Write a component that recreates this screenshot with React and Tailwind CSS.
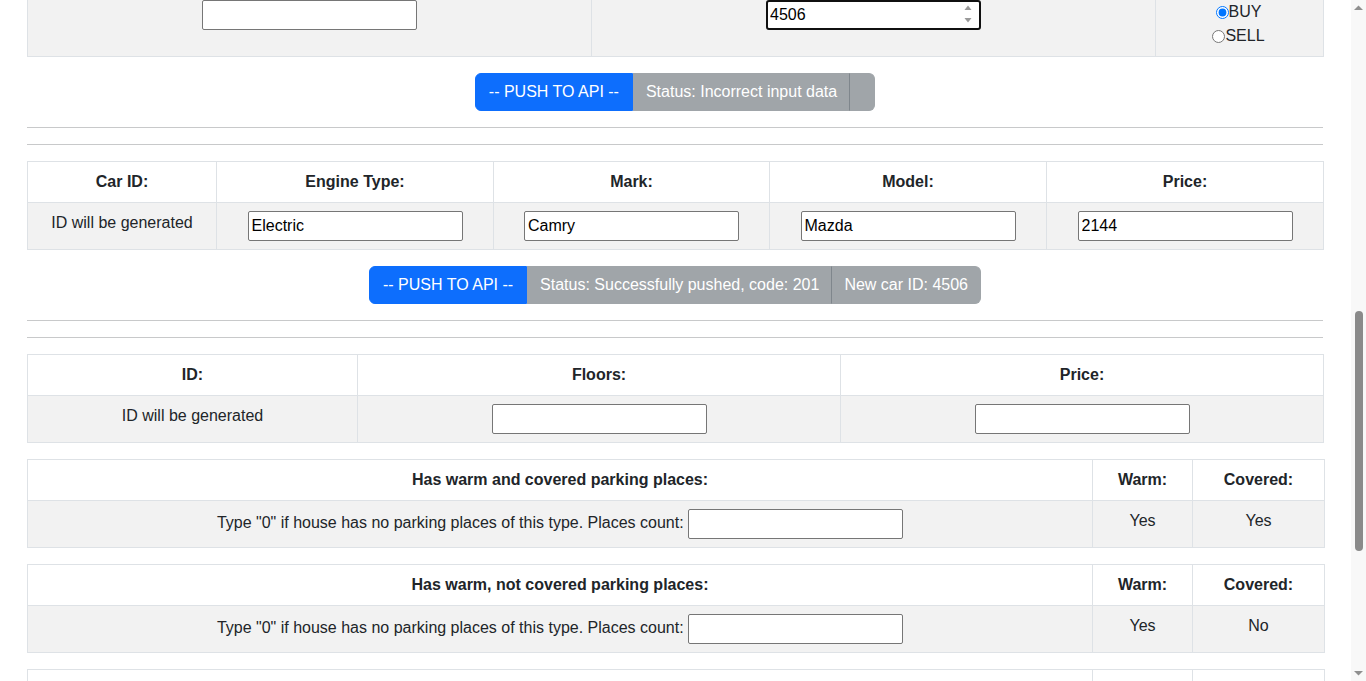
import React from 'react';

const cell = 'border border-[#dee2e6] p-2 text-center align-top';
const inputCls =
  'block mx-auto w-[215px] h-[30px] border border-[#767676] rounded-[2px] bg-white px-[3px] text-black text-[16px] outline-none';

const ButtonGroup = ({ items }) => (
  <div className="mt-4 flex justify-center">
    <div className="inline-flex">
      <button className="h-[38px] px-[13px] border border-[#0d6efd] bg-[#0d6efd] text-white rounded-l-md leading-6">
        -- PUSH TO API --
      </button>
      {items.map((text, i) => (
        <div
          key={i}
          className={
            'h-[38px] px-3 py-[6px] border border-[#a0a5a9] bg-[#a0a5a9] text-white leading-6 ' +
            (i > 0 ? '-ml-px border-l-[#7f868c] ' : '') +
            (i === items.length - 1 ? 'rounded-r-md' : '')
          }
        >
          {text}
        </div>
      ))}
    </div>
  </div>
);

const Rule = () => <hr className="mt-4 border-0 border-t border-[#c8c9ca]" />;

const ParkingTable = ({ title, warm, covered, filled = true }) => (
  <table className="mt-4 w-full table-fixed border-collapse">
    <colgroup>
      <col className="w-[1065px]" />
      <col className="w-[100px]" />
      <col className="w-[132px]" />
    </colgroup>
    <thead>
      <tr className="bg-white">
        <th className={cell}>{title}</th>
        <th className={cell}>{warm === null ? '\u00a0' : 'Warm:'}</th>
        <th className={cell}>{covered === null ? '\u00a0' : 'Covered:'}</th>
      </tr>
    </thead>
    {filled && (
      <tbody>
        <tr className="bg-[#f2f2f2]">
          <td className={cell}>
            Type "0" if house has no parking places of this type. Places count:{' '}
            <input
              type="text"
              className="inline-block align-middle w-[215px] h-[30px] border border-[#767676] rounded-[2px] bg-white px-[3px] text-black outline-none"
            />
          </td>
          <td className={cell}>{warm}</td>
          <td className={cell}>{covered}</td>
        </tr>
      </tbody>
    )}
  </table>
);

const FakeScrollbar = () => (
  <div className="w-[15px] h-[681px] bg-[#f8f8f8] flex flex-col items-center">
    <svg width="15" height="15" viewBox="0 0 15 15" className="shrink-0">
      <polygon points="3,10 7.5,5.5 12,10" fill="#8f8f8f" />
    </svg>
    <div className="h-[296px] shrink-0" />
    <div className="w-[8px] h-[240px] rounded-full bg-[#8a8a8a] shrink-0" />
    <div className="flex-1" />
    <svg width="15" height="15" viewBox="0 0 15 15" className="shrink-0">
      <polygon points="3,5 7.5,9.5 12,5" fill="#8f8f8f" />
    </svg>
  </div>
);

export default function App() {
  return (
    <div className="flex h-[681px] w-[1366px] overflow-hidden bg-white text-[16px] leading-6 text-[#212529] font-['Liberation_Sans',Arial,sans-serif]">
      <main className="w-[1351px] pl-[27px] pr-[28px] mt-[-9px]">
        {/* order form tail */}
        <table className="w-full table-fixed border-collapse">
          <colgroup>
            <col className="w-[564px]" />
            <col className="w-[564px]" />
            <col className="w-[168px]" />
          </colgroup>
          <tbody>
            <tr className="bg-[#f2f2f2]">
              <td className={cell}>
                <input type="text" className={inputCls} />
              </td>
              <td className={cell}>
                <div className="relative mx-auto w-[215px]">
                  <input
                    type="text"
                    defaultValue="4506"
                    className="block w-[215px] h-[30px] border-2 border-[#101010] rounded-[3px] bg-white px-[2px] text-black outline-none"
                  />
                  <svg
                    width="10"
                    height="22"
                    viewBox="0 0 10 22"
                    className="absolute right-[8px] top-[3px]"
                  >
                    <polygon points="1.5,7 5,2.5 8.5,7" fill="#9a9a9a" />
                    <polygon points="1.5,15 5,19.5 8.5,15" fill="#9a9a9a" />
                  </svg>
                </div>
              </td>
              <td className={cell}>
                <label className="flex items-center justify-center pr-[2px]">
                  <input type="radio" name="dir" defaultChecked className="m-0 w-[13px] h-[13px]" />
                  BUY
                </label>
                <label className="flex items-center justify-center pr-[2px]">
                  <input type="radio" name="dir" className="m-0 w-[13px] h-[13px]" />
                  SELL
                </label>
              </td>
            </tr>
          </tbody>
        </table>

        <ButtonGroup items={['Status: Incorrect input data', '']} />
        <Rule />
        <Rule />

        {/* car form */}
        <table className="mt-4 w-full table-fixed border-collapse">
          <colgroup>
            <col className="w-[189px]" />
            <col className="w-[277px]" />
            <col className="w-[276px]" />
            <col className="w-[277px]" />
            <col className="w-[277px]" />
          </colgroup>
          <thead>
            <tr className="bg-white">
              <th className={cell}>Car ID:</th>
              <th className={cell}>Engine Type:</th>
              <th className={cell}>Mark:</th>
              <th className={cell}>Model:</th>
              <th className={cell}>Price:</th>
            </tr>
          </thead>
          <tbody>
            <tr className="bg-[#f2f2f2]">
              <td className={cell}>ID will be generated</td>
              <td className={cell}>
                <input type="text" defaultValue="Electric" className={inputCls} />
              </td>
              <td className={cell}>
                <input type="text" defaultValue="Camry" className={inputCls} />
              </td>
              <td className={cell}>
                <input type="text" defaultValue="Mazda" className={inputCls} />
              </td>
              <td className={cell}>
                <input type="text" defaultValue="2144" className={inputCls} />
              </td>
            </tr>
          </tbody>
        </table>

        <ButtonGroup items={['Status: Successfully pushed, code: 201', 'New car ID: 4506']} />
        <Rule />
        <Rule />

        {/* house form */}
        <table className="mt-4 w-full table-fixed border-collapse">
          <colgroup>
            <col className="w-[330px]" />
            <col className="w-[483px]" />
            <col className="w-[483px]" />
          </colgroup>
          <thead>
            <tr className="bg-white">
              <th className={cell}>ID:</th>
              <th className={cell}>Floors:</th>
              <th className={cell}>Price:</th>
            </tr>
          </thead>
          <tbody>
            <tr className="bg-[#f2f2f2]">
              <td className={cell}>ID will be generated</td>
              <td className={cell}>
                <input type="text" className={inputCls} />
              </td>
              <td className={cell}>
                <input type="text" className={inputCls} />
              </td>
            </tr>
          </tbody>
        </table>

        <ParkingTable title="Has warm and covered parking places:" warm="Yes" covered="Yes" />
        <ParkingTable title="Has warm, not covered parking places:" warm="Yes" covered="No" />
        <ParkingTable title={'\u00a0'} warm={null} covered={null} />
      </main>
      <FakeScrollbar />
    </div>
  );
}
